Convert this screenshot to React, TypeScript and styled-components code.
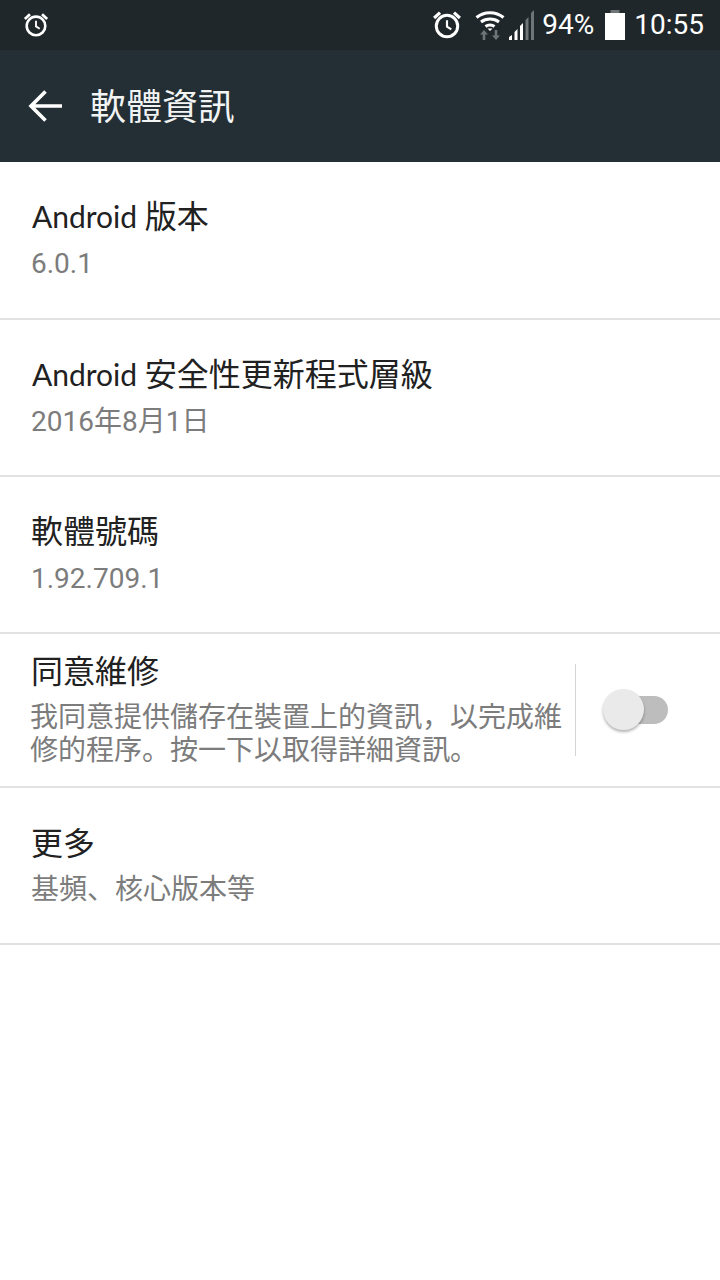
import React from 'react';
import styled, { createGlobalStyle } from 'styled-components';

const CJK = '"Noto Sans CJK JP", "Noto Sans CJK TC", sans-serif';

const GlobalStyle = createGlobalStyle`
  html, body {
    margin: 0;
    padding: 0;
    background: #ffffff;
  }
  body {
    font-family: Roboto, ${CJK};
  }
`;

const Page = styled.div`
  width: 720px;
  height: 1280px;
  background: #ffffff;
  overflow: hidden;
`;

const StatusBar = styled.div`
  height: 50px;
  background: #1f272b;
  display: flex;
  align-items: center;
  justify-content: space-between;
  padding: 0 16px 0 23px;
  box-sizing: border-box;
  color: #ffffff;
`;

const StatusRight = styled.div`
  display: flex;
  align-items: center;
`;

const StatusText = styled.span<{ $left: number }>`
  font-family: Roboto, sans-serif;
  font-size: 28px;
  line-height: 50px;
  margin-left: ${(p) => p.$left}px;
`;

const Icon = styled.svg<{ $left?: number }>`
  display: block;
  margin-left: ${(p) => p.$left ?? 0}px;
`;

const AppBar = styled.div`
  height: 112px;
  background: #242f35;
  display: flex;
  align-items: center;
  padding-left: 28px;
  box-sizing: border-box;
`;

const AppTitle = styled.div`
  font-family: ${CJK};
  font-size: 36px;
  line-height: 44px;
  color: #f2f4f4;
  margin-left: 27px;
  padding-bottom: 4px;
`;

const Row = styled.div<{ $height: number }>`
  height: ${(p) => p.$height}px;
  box-sizing: border-box;
  border-bottom: 2px solid #e2e2e2;
  display: flex;
  align-items: center;
`;

const RowText = styled.div<{ $top: number }>`
  flex: 1;
  align-self: flex-start;
  padding: ${(p) => p.$top}px 0 0 31px;
  min-width: 0;
`;

const Title = styled.div`
  font-family: ${CJK};
  font-size: 32px;
  line-height: 40px;
  color: #212121;
`;

const Latin = styled.span`
  font-family: Lato, sans-serif;
  font-size: 30px;
  margin-left: 1px;
`;

const Sub = styled.div<{ $top: number }>`
  font-family: Roboto, ${CJK};
  font-size: 28px;
  line-height: 33px;
  color: #7c7c7c;
  margin-top: ${(p) => p.$top}px;
`;

const SubNarrow = styled(Sub)`
  margin-left: -1px;
  width: 536px;
`;

const ToggleCell = styled.div`
  width: 145px;
  height: 92px;
  margin-top: -1px;
  border-left: 1px solid #d4d4d4;
  box-sizing: border-box;
  display: flex;
  align-items: center;
  padding-left: 28px;
`;

const Track = styled.div`
  position: relative;
  width: 64px;
  height: 28px;
  border-radius: 14px;
  background: #bdbdbd;
`;

const Thumb = styled.div`
  position: absolute;
  left: -1px;
  top: -7px;
  width: 41px;
  height: 41px;
  border-radius: 50%;
  background: #eaeaea;
  box-shadow: 0 2px 3px rgba(0, 0, 0, 0.3);
`;

const AlarmIcon = ({ size, left }: { size: number; left?: number }) => (
  <Icon $left={left} width={size} height={size} viewBox="0 0 28 28" fill="none">
    <circle cx="14" cy="15" r="10" stroke="#fff" strokeWidth="2.8" />
    <path d="M14 9.5V15.5L18 18" stroke="#fff" strokeWidth="2" />
    <path d="M2 7.5L7.5 2.5M26 7.5L20.5 2.5" stroke="#fff" strokeWidth="3" />
  </Icon>
);

const WifiIcon = () => (
  <Icon $left={13} width={30} height={30} viewBox="0 0 30 30" fill="none">
    <path d="M1.5 7.5C9 1 21 1 28.5 7.5" stroke="#fff" strokeWidth="3" />
    <path d="M6 12C11 8 19 8 24 12" stroke="#fff" strokeWidth="3" />
    <path d="M10.5 16.5C13 14.5 17 14.5 19.5 16.5" stroke="#fff" strokeWidth="3" />
    <path d="M15 21L12.5 18.5H17.5Z" fill="#fff" />
    <path d="M9 20L5 24.5H7.7V30H10.3V24.5H13Z" fill="#6f7476" />
    <path d="M19.7 20V25.5H17L21 30L25 25.5H22.3V20Z" fill="#6f7476" />
  </Icon>
);

const SignalIcon = () => (
  <Icon $left={4} width={26} height={30} viewBox="0 0 26 30">
    <path d="M0 30V27L3 25V30Z" fill="#fff" />
    <path d="M5.5 30V22L8.5 19V30Z" fill="#fff" />
    <path d="M11 30V16L14 13V30Z" fill="#fff" />
    <path d="M16.5 30V10L19.5 7V30Z" fill="#6f7476" />
    <path d="M22 30V3L25 0V30Z" fill="#6f7476" />
  </Icon>
);

const BatteryIcon = () => (
  <Icon $left={11} width={20} height={30} viewBox="0 0 20 30">
    <rect x="5.5" y="0" width="9" height="4" fill="#6f7476" />
    <rect x="0" y="3" width="20" height="27" fill="#fff" />
  </Icon>
);

const BackArrow = () => (
  <Icon width={35} height={32} viewBox="0 0 35 32" fill="none">
    <path d="M34 16H3M17.5 1.5L3 16L17.5 30.5" stroke="#fff" strokeWidth="3.6" />
  </Icon>
);

const App: React.FC = () => (
  <Page>
    <GlobalStyle />
    <StatusBar>
      <AlarmIcon size={26} />
      <StatusRight>
        <AlarmIcon size={30} />
        <WifiIcon />
        <SignalIcon />
        <StatusText $left={7}>94%</StatusText>
        <BatteryIcon />
        <StatusText $left={9}>10:55</StatusText>
      </StatusRight>
    </StatusBar>
    <AppBar>
      <BackArrow />
      <AppTitle>軟體資訊</AppTitle>
    </AppBar>
    <Row $height={158}>
      <RowText $top={32}>
        <Title><Latin>Android </Latin>版本</Title>
        <Sub $top={11}>6.0.1</Sub>
      </RowText>
    </Row>
    <Row $height={157}>
      <RowText $top={32}>
        <Title><Latin>Android </Latin>安全性更新程式層級</Title>
        <Sub $top={11}>2016年8月1日</Sub>
      </RowText>
    </Row>
    <Row $height={157}>
      <RowText $top={32}>
        <Title>軟體號碼</Title>
        <Sub $top={13}>1.92.709.1</Sub>
      </RowText>
    </Row>
    <Row $height={154}>
      <RowText $top={15}>
        <Title>同意維修</Title>
        <SubNarrow $top={12}>我同意提供儲存在裝置上的資訊，以完成維修的程序。按一下以取得詳細資訊。</SubNarrow>
      </RowText>
      <ToggleCell>
        <Track>
          <Thumb />
        </Track>
      </ToggleCell>
    </Row>
    <Row $height={157}>
      <RowText $top={33}>
        <Title>更多</Title>
        <Sub $top={12}>基頻、核心版本等</Sub>
      </RowText>
    </Row>
  </Page>
);

export default App;
